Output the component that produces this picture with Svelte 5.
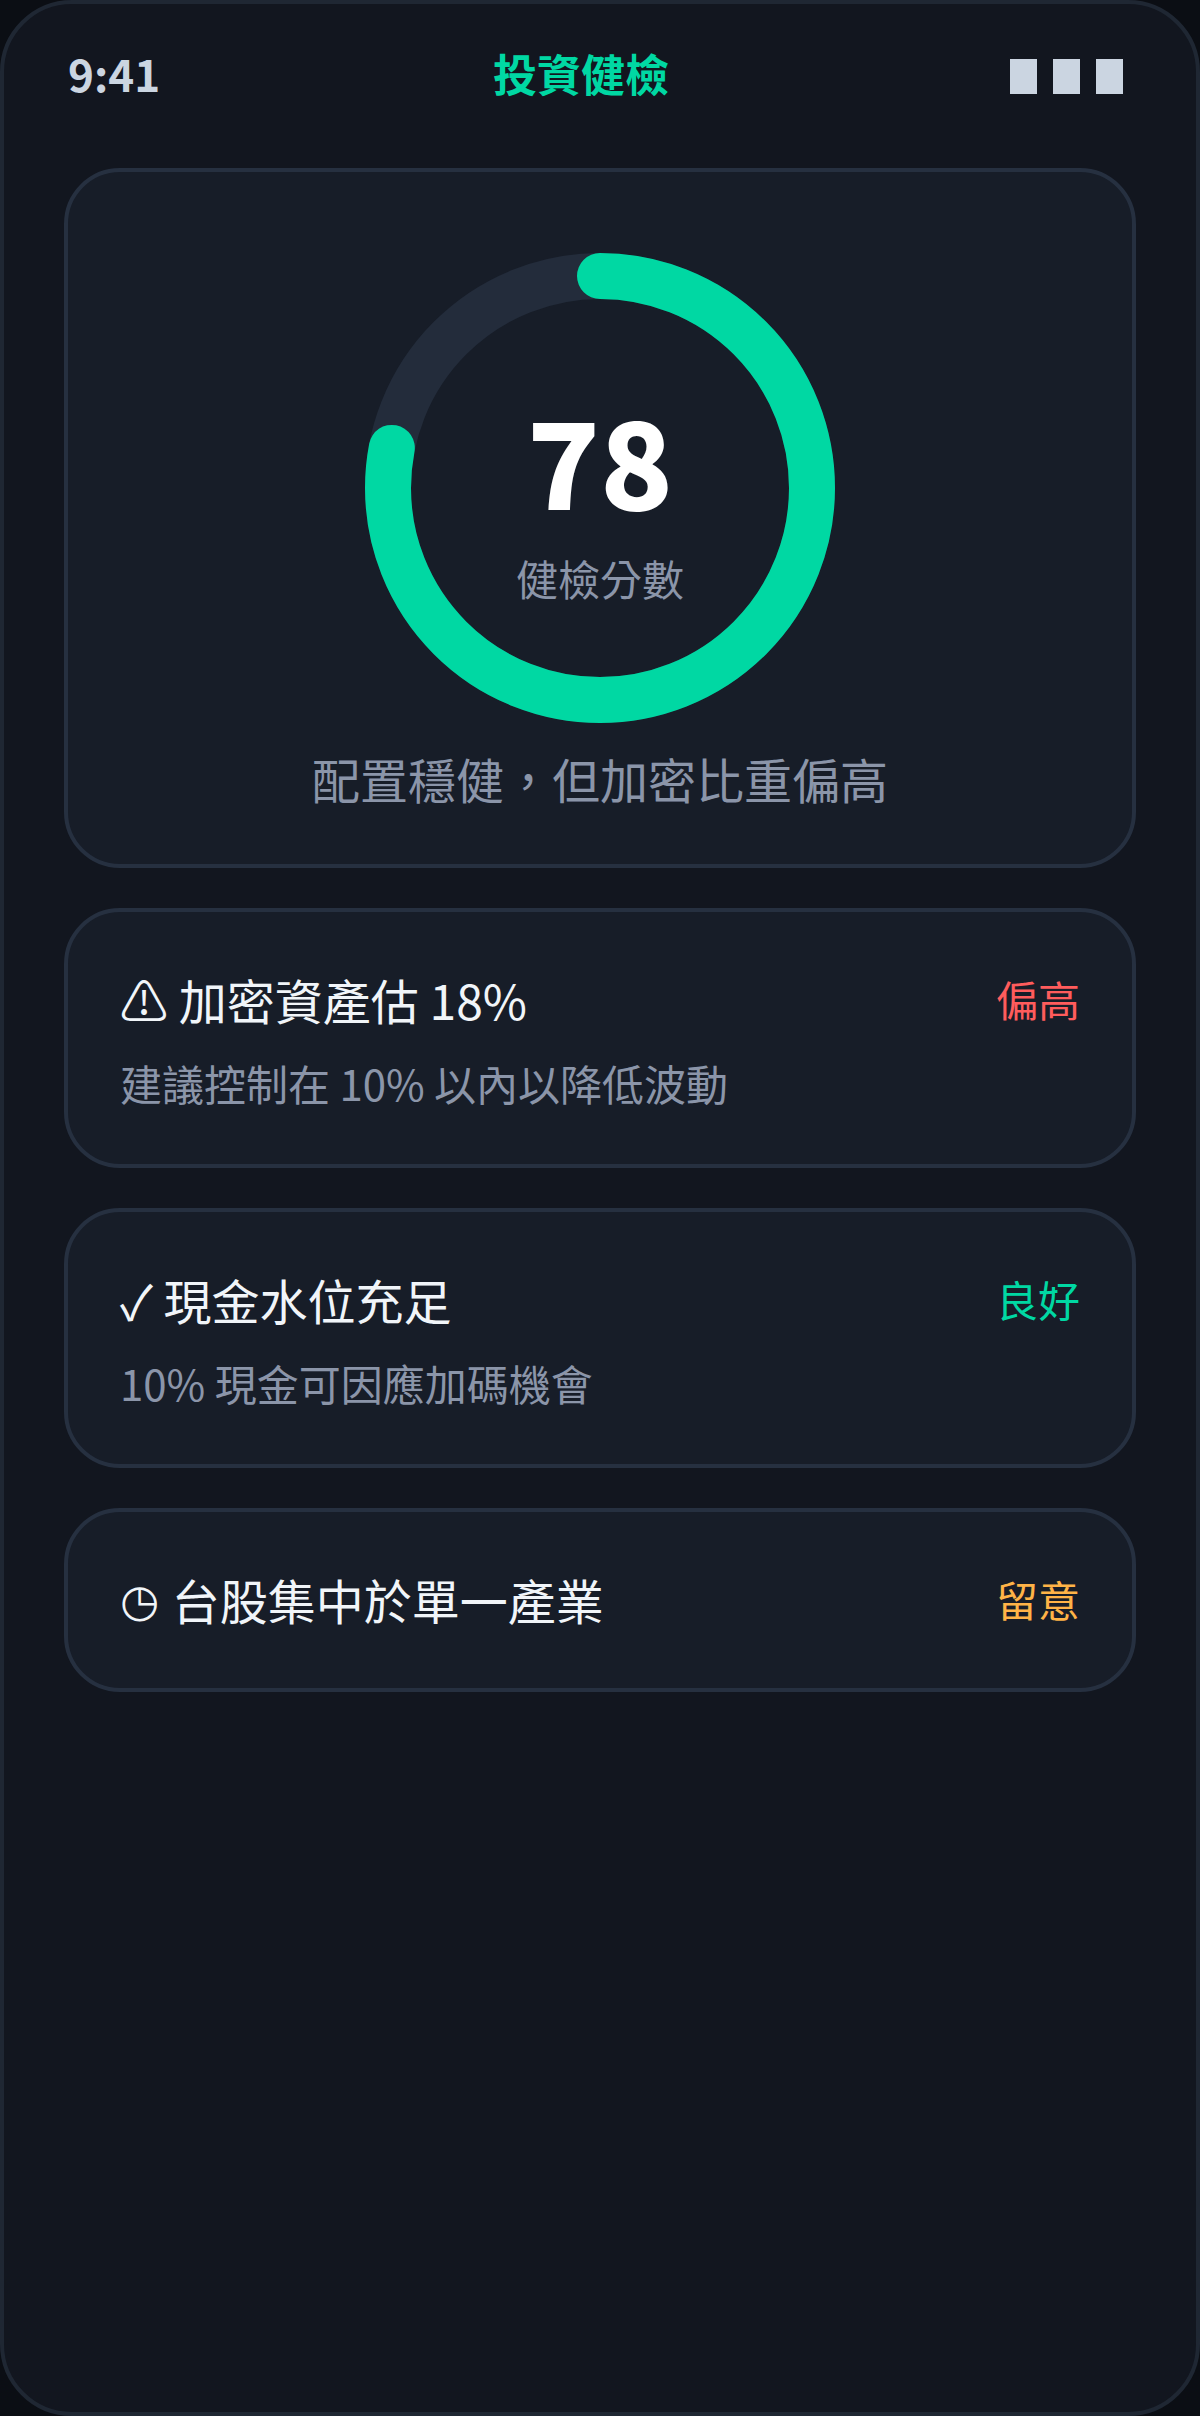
<script>
    const findings = [
        { icon: "⚠", title: "加密資產估 18%", note: "建議控制在 10% 以內以降低波動", status: "偏高", tone: "bad" },
        { icon: "✓", title: "現金水位充足", note: "10% 現金可因應加碼機會", status: "良好", tone: "good" },
        { icon: "◷", title: "台股集中於單一產業", note: "", status: "留意", tone: "warn" },
    ];

    const score = 78;
    const radius = 212;
    const circumference = 2 * Math.PI * radius;
</script>

<div class="phone">
    <header class="status">
        <span class="time">9:41</span>
        <span class="title">投資健檢</span>
        <div class="signal">
            <i></i>
            <i></i>
            <i></i>
        </div>
    </header>

    <main class="content">
        <section class="card hero">
            <div class="ring">
                <svg width="470" height="470" viewBox="0 0 470 470">
                    <circle cx="235" cy="235" r={radius} fill="none" stroke="#232c3b" stroke-width="46" />
                    <circle
                        cx="235"
                        cy="235"
                        r={radius}
                        fill="none"
                        stroke="#00d8a3"
                        stroke-width="46"
                        stroke-linecap="round"
                        stroke-dasharray="{(circumference * score) / 100} {circumference}"
                        transform="rotate(-90 235 235)"
                    />
                </svg>
                <div class="ring-label">
                    <div class="score">{score}</div>
                    <div class="score-name">健檢分數</div>
                </div>
            </div>
            <p class="summary">配置穩健，但加密比重偏高</p>
        </section>

        {#each findings as item}
            <section class="card finding">
                <div class="row">
                    <div class="finding-title">
                        <span class="icon" class:clock={item.icon === "◷"}>{item.icon}</span>
                        {item.title}
                    </div>
                    <div class="badge {item.tone}">{item.status}</div>
                </div>
                {#if item.note}
                    <div class="note">{item.note}</div>
                {/if}
            </section>
        {/each}
    </main>
</div>

<style>
    :global(body) {
        background: #0b0e14;
    }
    .phone {
        box-sizing: border-box;
        width: 1200px;
        height: 2416px;
        background: #12161f;
        border: 4px solid #1f2733;
        border-radius: 72px;
        font-family: "Noto Sans CJK TC", "Noto Sans", sans-serif;
        overflow: hidden;
    }
    .status {
        display: flex;
        justify-content: space-between;
        align-items: center;
        height: 144px;
        padding: 0 73px 6px 64px;
        box-sizing: border-box;
    }
    .time {
        font-size: 44px;
        font-weight: 700;
        color: #cbd5e1;
    }
    .title {
        font-size: 44px;
        font-weight: 700;
        color: #00d8a3;
    }
    .signal {
        display: flex;
        gap: 16px;
        margin-left: 8px;
        margin-top: 6px;
    }
    .signal i {
        display: block;
        width: 27px;
        height: 35px;
        background: #cbd5e1;
    }
    .content {
        display: flex;
        flex-direction: column;
        gap: 40px;
        padding: 20px 60px 0;
    }
    .card {
        box-sizing: border-box;
        background: #171d28;
        border: 4px solid #263040;
        border-radius: 56px;
    }
    .hero {
        height: 700px;
        display: flex;
        flex-direction: column;
        align-items: center;
        padding-top: 81px;
    }
    .ring {
        position: relative;
        width: 470px;
        height: 470px;
    }
    .ring svg {
        display: block;
    }
    .ring-label {
        position: absolute;
        inset: 0;
        padding-top: 20px;
        display: flex;
        flex-direction: column;
        align-items: center;
        justify-content: center;
    }
    .score {
        font-size: 120px;
        font-weight: 900;
        line-height: 140px;
        color: #ffffff;
    }
    .score-name {
        margin-top: 20px;
        font-size: 42px;
        line-height: 60px;
        color: #8b95a9;
    }
    .summary {
        margin: 20px 0 0;
        font-size: 48px;
        line-height: 70px;
        color: #8b95a9;
    }
    .finding {
        padding: 52px 52px 54px;
    }
    .row {
        display: flex;
        justify-content: space-between;
        align-items: center;
    }
    .finding-title {
        font-size: 48px;
        line-height: 70px;
        color: #f1f5f9;
    }
    .clock {
        font-size: 45px;
        line-height: 1;
        margin-right: 2px;
        vertical-align: 4px;
    }
    .badge {
        font-size: 42px;
        line-height: 60px;
    }
    .bad {
        color: #ff5c5c;
    }
    .good {
        color: #00d8a3;
    }
    .warn {
        color: #ffb347;
    }
    .note {
        margin-top: 21px;
        font-size: 42px;
        line-height: 55px;
        color: #8b95a9;
    }
</style>
